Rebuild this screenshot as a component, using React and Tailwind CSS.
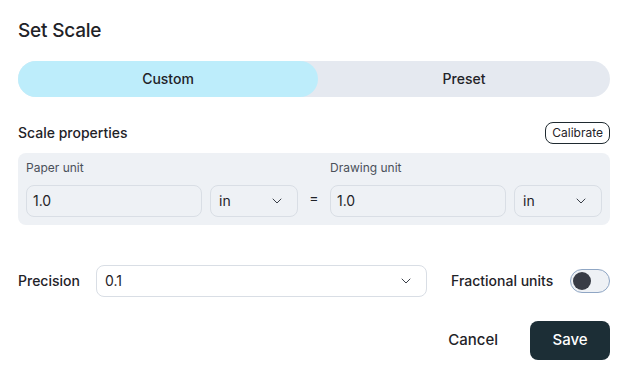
import { ChevronDown } from "lucide-react";

const UnitSelect = () => (
	<div className="w-[88px] h-8 flex items-center justify-between pl-2 pr-3 border border-[#d9dee5] rounded-lg text-sm text-[#1f2328]">
		<span>in</span>
		<ChevronDown size={16} strokeWidth={1.5} className="text-[#3a3f48]" />
	</div>
);

const NumberInput = ({ value }) => (
	<div className="w-[176px] h-8 flex items-center px-[6px] border border-[#d9dee5] rounded-lg text-sm text-[#1f2328]">{value}</div>
);

const App = () => {
	return (
		<div className="w-[628px] h-[379px] bg-white px-[18px] font-['Inter',sans-serif] text-[#1f2328]">
			{/* Title */}
			<h1 className="pt-[18px] text-[19px] font-medium leading-[26px] tracking-[-0.2px]">Set Scale</h1>

			{/* Tabs */}
			<div className="mt-[17px] h-9 flex rounded-full bg-[#e5e9f0] text-sm font-medium">
				<div className="w-[300px] flex items-center justify-center rounded-full bg-[#bdedfb]">Custom</div>
				<div className="flex-1 flex items-center justify-center">Preset</div>
			</div>

			{/* Scale properties */}
			<div className="mt-[24px] flex items-center justify-between h-6">
				<span className="text-sm font-medium">Scale properties</span>
				<button className="h-[22px] px-[6px] border border-[#1f2a30] rounded-lg text-xs">Calibrate</button>
			</div>

			<div className="mt-2 h-[72px] rounded-lg bg-[#eef1f5] px-2 pt-[7px] flex items-start gap-2">
				<div className="flex flex-col gap-[9px]">
					<span className="text-xs text-[#4a505a] leading-4">Paper unit</span>
					<div className="flex gap-2">
						<NumberInput value="1.0" />
						<UnitSelect />
					</div>
				</div>
				<span className="w-6 pt-[28px] text-center text-sm">=</span>
				<div className="flex flex-col gap-[9px]">
					<span className="text-xs text-[#4a505a] leading-4">Drawing unit</span>
					<div className="flex gap-2">
						<NumberInput value="1.0" />
						<UnitSelect />
					</div>
				</div>
			</div>

			{/* Precision */}
			<div className="mt-10 flex items-center h-8">
				<span className="w-[78px] text-sm font-medium">Precision</span>
				<div className="w-[331px] h-8 flex items-center justify-between pl-2 pr-3 border border-[#d9dee5] rounded-lg text-sm">
					<span>0.1</span>
					<ChevronDown size={16} strokeWidth={1.5} className="text-[#3a3f48]" />
				</div>
				<span className="ml-6 text-sm font-medium">Fractional units</span>
				<div className="ml-auto w-10 h-6 rounded-full border border-[#8fa6c4] bg-[#eef1f5] flex items-center pl-[2px]">
					<div className="w-[18px] h-[18px] rounded-full bg-[#383c46]" />
				</div>
			</div>

			{/* Actions */}
			<div className="mt-6 flex items-center justify-end gap-8">
				<button className="text-[15px] font-medium">Cancel</button>
				<button className="w-20 h-[39px] rounded-lg bg-[#1c2e36] text-white text-[15px] font-medium">Save</button>
			</div>
		</div>
	);
};

export default App;
